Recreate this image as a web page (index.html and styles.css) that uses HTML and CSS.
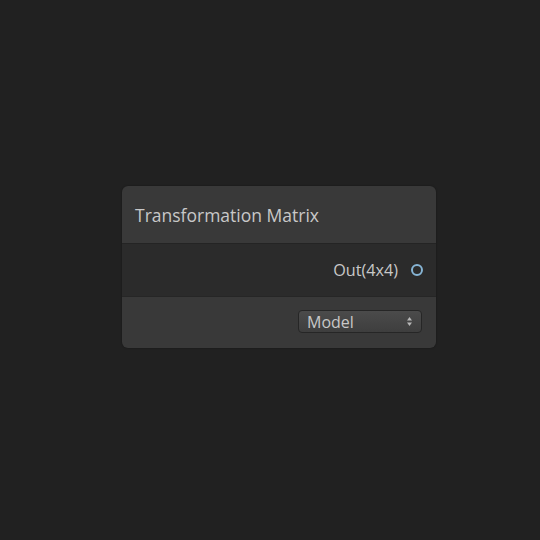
FILE: index.html
```html
<!DOCTYPE html>
<html>
<head>
<meta charset="utf-8">
<link rel="stylesheet" href="styles.css">
</head>
<body>
<div class="canvas">
  <div class="node">
    <div class="node-title">Transformation Matrix</div>
    <div class="node-outputs">
      <span class="port-label">Out(4x4)</span>
      <span class="port"></span>
    </div>
    <div class="node-controls">
      <div class="select">
        <span class="select-value">Model</span>
        <svg class="select-arrows" width="7" height="11" viewBox="0 0 7 11">
          <path d="M3.5 1 L6 4.5 L1 4.5 Z" fill="#b8b8b8"/>
          <path d="M3.5 10 L6 6.5 L1 6.5 Z" fill="#b8b8b8"/>
        </svg>
      </div>
    </div>
  </div>
</div>
</body>
</html>
```

FILE: styles.css
```css
html, body {
  margin: 0;
  padding: 0;
  background: #212121;
}
.canvas {
  width: 540px;
  height: 540px;
  display: flex;
  flex-direction: column;
  padding-top: 186px;
  padding-left: 122px;
  box-sizing: border-box;
}
.node {
  width: 314px;
  border-radius: 6px;
  background: #393939;
  overflow: hidden;
  font-family: "Open Sans", "DejaVu Sans", sans-serif;
  color: #c8c8c8;
  box-shadow: 0 0 2px rgba(0,0,0,0.4);
}
.node-title {
  height: 58px;
  box-sizing: border-box;
  padding-left: 13px;
  display: flex;
  align-items: center;
  font-size: 17.5px;
  border-bottom: 1px solid #242424;
}
.node-outputs {
  height: 53px;
  box-sizing: border-box;
  background: #2b2b2b;
  display: flex;
  align-items: center;
  justify-content: flex-end;
  padding-right: 13px;
  border-bottom: 1px solid #262626;
  font-size: 16.2px;
}
.port-label {
  margin-right: 13px;
}
.port {
  width: 8px;
  height: 8px;
  border: 2px solid #86b4d4;
  border-radius: 50%;
  box-sizing: content-box;
}
.node-controls {
  height: 51px;
  display: flex;
  align-items: center;
  justify-content: flex-end;
  padding-right: 14px;
}
.select {
  width: 124px;
  height: 23px;
  box-sizing: border-box;
  border: 1px solid #262626;
  border-radius: 4px;
  background: linear-gradient(#4b4b4b, #3e3e3e);
  display: flex;
  align-items: center;
  justify-content: space-between;
  padding: 0 8px 0 8px;
  font-size: 16px;
  color: #c8c8c8;
  margin-top: -2px;
}
.select-arrows {
  display: block;
}
```
